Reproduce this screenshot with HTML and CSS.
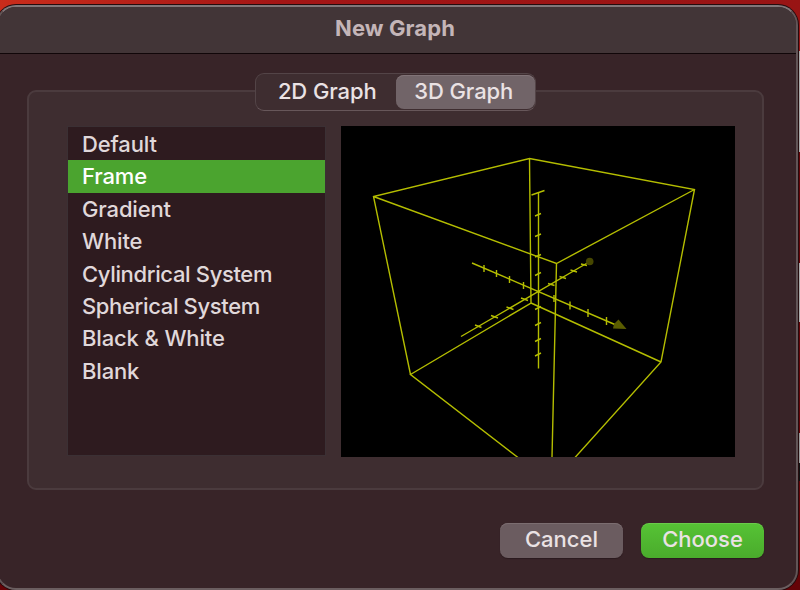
FILE: index.html
```
<!DOCTYPE html>
<html lang="en">

<head>
    <meta charset="utf-8">
    <meta name="viewport" content="width=device-width, initial-scale=1.0">
    <title>New Graph</title>
    <link rel="stylesheet" href="styles.css">
</head>

<body>
    <section class="window">
        <header>
            <h1>New Graph</h1>
        </header>
        <main>
            <nav class="tabs">
                <button class="tab">2D Graph</button>
                <button class="tab selected">3D Graph</button>
            </nav>
            <section class="panel">
                <ul class="templates">
                    <li>Default</li>
                    <li class="selected">Frame</li>
                    <li>Gradient</li>
                    <li>White</li>
                    <li class="wide">Cylindrical System</li>
                    <li class="wide">Spherical System</li>
                    <li>Black &amp; White</li>
                    <li>Blank</li>
                </ul>
                <svg class="preview" viewBox="341 126 394 331" width="394" height="331">
                    <!-- frame -->
                    <path d="M410.5 374.5L373.5 196.5L529.5 158.5L694.5 189.5L661 362L575 457.5M373.5 196.5L556.5 263.5L694.5 189.5M529.5 158.5L531 303L410.5 374.5L518 457.5M531 303L661 362M556.5 263.5L552 457" />
                    <!-- axes -->
                    <path d="M538.5 192V368.5M472 263L616 325M461 336.5L589 262" />
                    <!-- ticks -->
                    <path d="M531.5 195L544.5 190.5M535 216L541 213.5M535 236.5L541 234M535 257L541 254.5M535 275.5L541 272.5M535 309.5L541 306.5M535 325.5L541 322.5M535 341.5L541 338.5M535 356L541 353" />
                    <path d="M484 265V272M496.5 270V277M509.5 276V283M523.5 282V289M554 295V302M570 301.5V309.500M588 309V317M606.5 317V325" />
                    <path d="M475 325L481.5 327.5M491 315.5L498 318M506.5 307L513.5 309.5M521 298L528 300.5M548 283.5L554.5 285.5M559.5 276.5L566 278.5M570.5 270L577 272M581 264L587 265.5" />
                    <path class="cone" d="M618.5 319.5L626.5 329L613 328.5L614 324Z" />
                    <circle class="cone" cx="589.7" cy="261.5" r="3.8" />
                </svg>
            </section>
            <footer>
                <button class="cancel">Cancel</button>
                <button class="choose">Choose</button>
            </footer>
        </main>
    </section>
</body>

</html>
```
FILE: styles.css
```
* {
    box-sizing: border-box;
}

body {
    margin: 0;
    width: 800px;
    height: 590px;
    overflow: hidden;
    background: linear-gradient(to right, #c92c1b, #a31515 35%, #981414) no-repeat 0 0 / 800px 51px,
        linear-gradient(#aaa 0 101px, #650307 101px 212px, #aaa 212px 271px, #650307 271px 382px, #999 382px 412px, #111 412px 430px, #650307 430px) no-repeat 0 51px / 800px 539px;
    font-family: Inter, "Liberation Sans", sans-serif;
    font-size: 22px;
    font-weight: 450;
}

.window {
    width: 802px;
    height: 585px;
    margin: 5px 0 0 -4px;
    padding-left: 2px;
    border: 2px solid;
    border-color: #807779 #625557 #6b5e60;
    border-radius: 20px;
    background-color: #382428;
    overflow: hidden;
    box-shadow: 0 0 0 1px #240c0e;
}

header {
    height: 47px;
    margin-left: -2px;
    background-color: #423537;
    border-bottom: 1px solid #100608;
}

h1 {
    margin: 0;
    padding-right: 4px;
    font-size: 22px;
    font-weight: 650;
    line-height: 43px;
    letter-spacing: 0.1px;
    text-align: center;
    color: #c4b5b8;
}

main {
    display: flex;
    flex-direction: column;
    padding: 19px 32px 0 27px;
}

button {
    padding: 0 0 3px;
    border: none;
    font-family: inherit;
    font-size: 22px;
    font-weight: 450;
    color: #eae2e4;
}

.tabs {
    display: flex;
    align-self: center;
    width: 281px;
    height: 38px;
    padding: 1px 0 1px 1px;
    border: 1px solid #534447;
    border-bottom-color: #67575a;
    border-radius: 9px;
    background-color: #3e2d30;
    z-index: 1;
}

.tab {
    width: 139px;
    padding-left: 2px;
    border-radius: 8px;
    background: none;
    letter-spacing: -0.1px;
}

.tab.selected {
    width: 140px;
    padding: 0 3px 3px 0;
    background-color: #716468;
    box-shadow: inset 0 1px #817377;
}

.panel {
    display: flex;
    gap: 15px;
    width: 737px;
    height: 400px;
    margin-top: -21px;
    padding: 34px 0 0 38px;
    border: 2px solid #4b3b3e;
    border-radius: 9px;
    background-color: #3e2d30;
}

.templates {
    width: 259px;
    height: 330px;
    margin: 0;
    padding: 1px 0 0;
    border: 1px solid #3b3034;
    background-color: #2e1b1f;
    list-style: none;
}

.templates li {
    height: 32.4px;
    padding-left: 14px;
    line-height: 32.4px;
    letter-spacing: -0.15px;
    color: #e0d8da;
}

.templates .wide {
    letter-spacing: -0.35px;
}

.templates .selected {
    padding-left: 14px;
    background-color: #4ba42f;
    color: #fff;
}

.preview {
    background-color: #000;
}

.preview path {
    fill: none;
    stroke: #b4bd00;
    stroke-width: 1.4;
}

.preview .cone {
    fill: #5a5c00;
    stroke: none;
}

.preview circle.cone {
    fill: #464700;
}

footer {
    display: flex;
    justify-content: flex-end;
    gap: 18px;
    margin-top: 33px;
}

footer button {
    width: 123px;
    height: 35px;
    border-radius: 8px;
}

.cancel {
    background-color: #6b5c60;
    box-shadow: inset 0 1px #7b6d70, 0 1px 1px #2b1a1e;
}

.choose {
    background-image: linear-gradient(#56c335, #4aab2c);
    box-shadow: inset 0 1px #6acb4b, 0 1px 1px #2b1a1e;
}
```
